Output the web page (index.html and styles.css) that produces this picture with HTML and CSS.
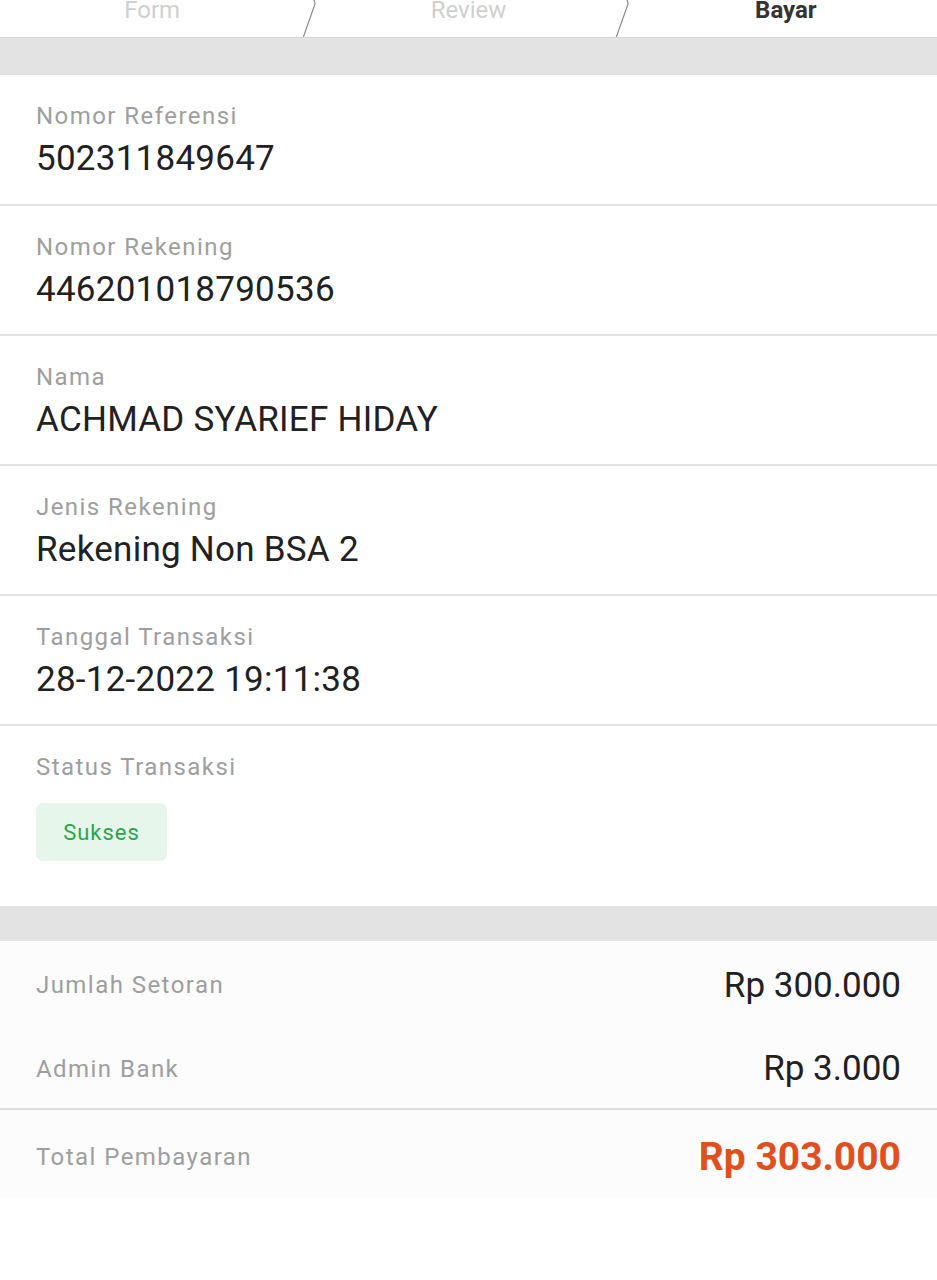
FILE: index.html
```html
<!DOCTYPE html>
<html lang="id">
<head>
<meta charset="utf-8">
<title>Bayar</title>
<link rel="stylesheet" href="styles.css">
</head>
<body>
<div class="steps">
  <div class="step">Form</div>
  <div class="step">Review
    <svg class="chev" width="20" height="38" viewBox="0 0 20 38"><polyline points="10,-20 15,4 3,38" fill="none" stroke="#8a8a8a" stroke-width="1.2"/></svg>
  </div>
  <div class="step active">Bayar
    <svg class="chev" width="20" height="38" viewBox="0 0 20 38"><polyline points="10,-20 15,4 3,38" fill="none" stroke="#8a8a8a" stroke-width="1.2"/></svg>
  </div>
</div>
<div class="band"></div>
<div class="details">
  <div class="row first"><div class="label">Nomor Referensi</div><div class="value">502311849647</div></div>
  <div class="row"><div class="label">Nomor Rekening</div><div class="value">446201018790536</div></div>
  <div class="row"><div class="label">Nama</div><div class="value">ACHMAD SYARIEF HIDAY</div></div>
  <div class="row"><div class="label">Jenis Rekening</div><div class="value">Rekening Non BSA 2</div></div>
  <div class="row"><div class="label">Tanggal Transaksi</div><div class="value">28-12-2022 19:11:38</div></div>
  <div class="row status"><div class="label">Status Transaksi</div><div class="badge">Sukses</div></div>
</div>
<div class="band band2"></div>
<div class="summary">
  <div class="srow r1"><span class="label">Jumlah Setoran</span><span class="amount">Rp 300.000</span></div>
  <div class="srow r2"><span class="label">Admin Bank</span><span class="amount">Rp 3.000</span></div>
  <div class="srow r3"><span class="label">Total Pembayaran</span><span class="amount total">Rp 303.000</span></div>
</div>
</body>
</html>
```
FILE: styles.css
```css
* { box-sizing: border-box; }
html, body { margin: 0; padding: 0; background: #ffffff; }
body { font-family: Roboto, "Noto Sans", "Liberation Sans", sans-serif; color: #212121; }

.steps {
  display: grid;
  grid-template-columns: 1fr 1fr 1fr;
  height: 38px;
  border-bottom: 1px solid #d4d4d4;
  background: #fff;
  overflow: hidden;
}
.step {
  position: relative;
  text-align: center;
  font-size: 24px;
  line-height: 20px;
  color: #cfcfcf;
}
.step:first-child { padding-right: 8px; }
.step.active { color: #333333; font-weight: 700; padding-left: 10px; }
.chev { position: absolute; left: -12px; top: 0; }

.band { height: 37px; background: #e3e3e3; }
.band2 { height: 35px; }

.row {
  padding: 27px 36px 23px;
  border-bottom: 2px solid #e2e2e2;
}
.row.first { padding-bottom: 24px; }
.row.status { border-bottom: none; padding-bottom: 45px; }
.label {
  font-size: 24px;
  line-height: 28px;
  letter-spacing: 1.45px;
  color: #9e9e9e;
}
.value {
  margin-top: 8px;
  font-size: 35px;
  line-height: 42px;
  letter-spacing: 0.25px;
  color: #212121;
}
.badge {
  display: inline-flex;
  align-items: center;
  justify-content: center;
  margin-top: 22px;
  width: 131px;
  height: 58px;
  border-radius: 7px;
  background: #e6f6ea;
  color: #2aa54d;
  font-size: 22px;
  letter-spacing: 1px;
}

.summary { background: #fcfcfc; }
.srow {
  display: flex;
  justify-content: space-between;
  align-items: center;
  padding: 0 36px;
}
.srow.r1 { height: 88px; }
.srow.r2 { height: 81px; border-bottom: 2px solid #dcdcdc; }
.srow.r3 { height: 88px; padding-top: 6px; }
.amount { font-size: 35px; color: #212121; }
.amount.total { font-size: 39px; font-weight: 700; color: #e04f1e; }
```
